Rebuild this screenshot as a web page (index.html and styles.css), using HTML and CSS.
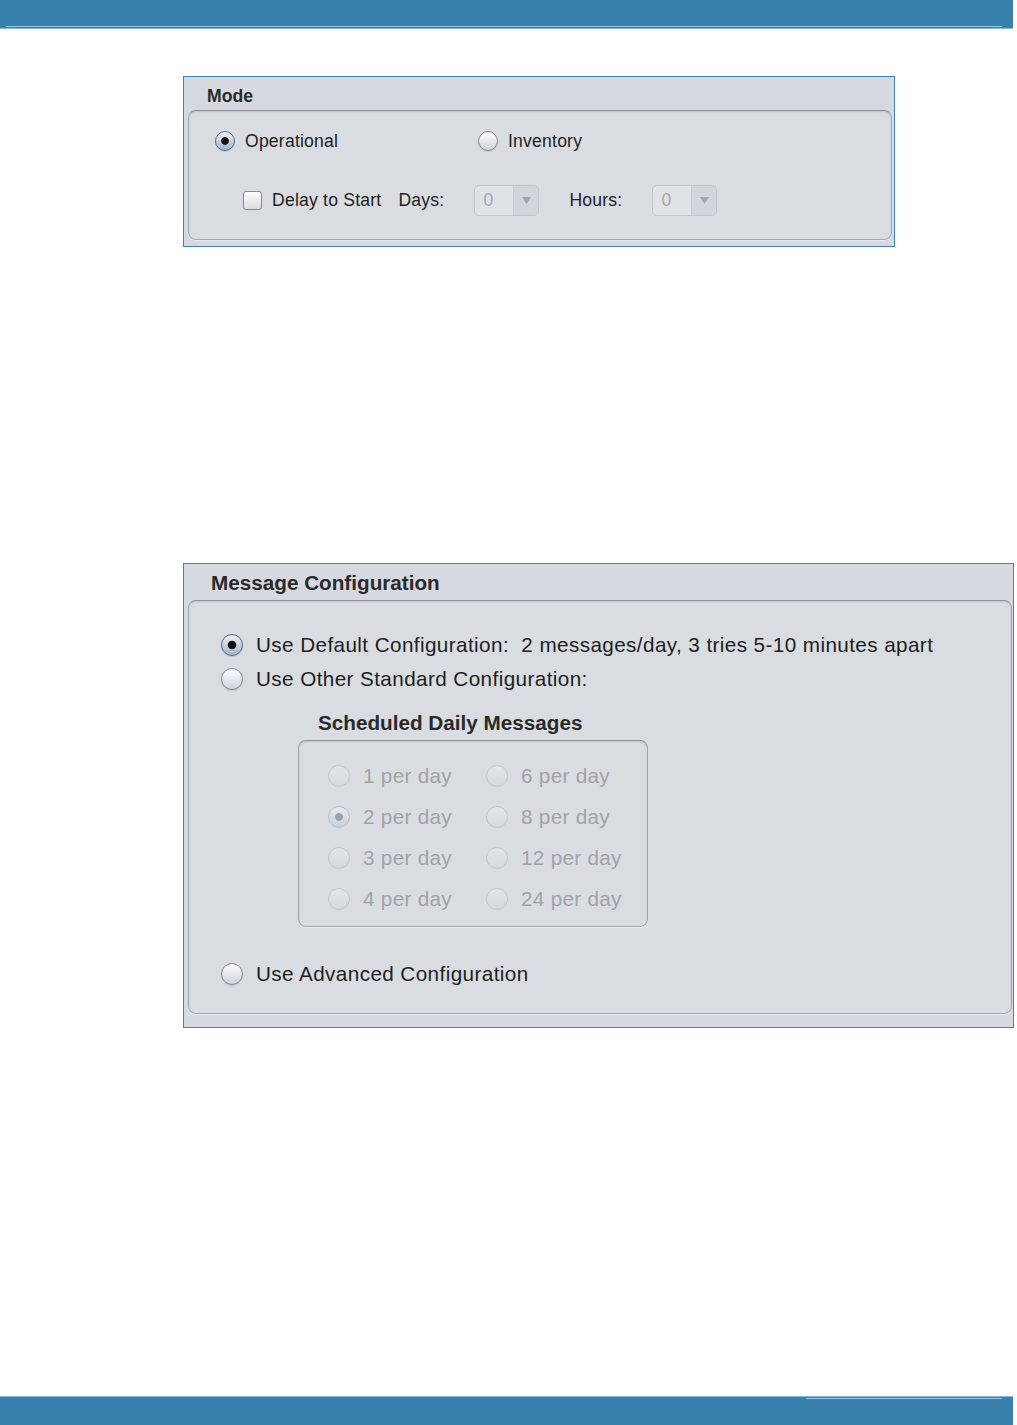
FILE: index.html
```html
<!DOCTYPE html>
<html lang="en">
<head>
    <meta charset="UTF-8">
    <title>Mode and Message Configuration</title>
    <link rel="stylesheet" href="styles.css">
</head>
<body>
    <div class="topbar">
        <div class="topbar-rule"></div>
    </div>

    <div class="content">
        <!-- Mode -->
        <div class="panel panel-mode">
            <div class="panel-title">Mode</div>
            <div class="group">
                <div class="row">
                    <label class="option option-wide">
                        <span class="radio on"></span>
                        <span>Operational</span>
                    </label>
                    <label class="option">
                        <span class="radio"></span>
                        <span>Inventory</span>
                    </label>
                </div>
                <div class="row row-delay">
                    <label class="option">
                        <span class="checkbox"></span>
                        <span>Delay to Start</span>
                    </label>
                    <span class="field-label days">Days:</span>
                    <div class="combo">
                        <span class="combo-value">0</span>
                        <span class="combo-arrow">
                            <svg width="9" height="7" viewBox="0 0 9 7"><polygon points="0,0 9,0 4.5,7" fill="#a3a8af"/></svg>
                        </span>
                    </div>
                    <span class="field-label hours">Hours:</span>
                    <div class="combo">
                        <span class="combo-value">0</span>
                        <span class="combo-arrow">
                            <svg width="9" height="7" viewBox="0 0 9 7"><polygon points="0,0 9,0 4.5,7" fill="#a3a8af"/></svg>
                        </span>
                    </div>
                </div>
            </div>
        </div>

        <!-- Message Configuration -->
        <div class="panel panel-msg">
            <div class="panel-title">Message Configuration</div>
            <div class="group">
                <div class="msg-options">
                    <label class="option">
                        <span class="radio on"></span>
                        <span>Use Default Configuration:&nbsp; 2 messages/day, 3 tries 5-10 minutes apart</span>
                    </label>
                    <label class="option">
                        <span class="radio"></span>
                        <span>Use Other Standard Configuration:</span>
                    </label>
                </div>

                <div class="schedule">
                    <div class="schedule-title">Scheduled Daily Messages</div>
                    <div class="group schedule-box">
                        <label class="option disabled"><span class="radio"></span><span>1 per day</span></label>
                        <label class="option disabled"><span class="radio"></span><span>6 per day</span></label>
                        <label class="option disabled"><span class="radio on"></span><span>2 per day</span></label>
                        <label class="option disabled"><span class="radio"></span><span>8 per day</span></label>
                        <label class="option disabled"><span class="radio"></span><span>3 per day</span></label>
                        <label class="option disabled"><span class="radio"></span><span>12 per day</span></label>
                        <label class="option disabled"><span class="radio"></span><span>4 per day</span></label>
                        <label class="option disabled"><span class="radio"></span><span>24 per day</span></label>
                    </div>
                </div>

                <label class="option advanced">
                    <span class="radio"></span>
                    <span>Use Advanced Configuration</span>
                </label>
            </div>
        </div>
    </div>

    <div class="bottombar">
        <div class="bottombar-rule"></div>
    </div>
</body>
</html>
```

FILE: styles.css
```css
/* Pagina con dos paneles de configuracion */

body {
    margin: 0;
    padding: 0;
    font-family: "Liberation Sans", Arial, sans-serif;
    color: #1e1e1e;
    background-color: white;
    display: flex;
    flex-direction: column;
    height: 100vh;
}
.topbar {
    width: 1013px;
    height: 29px;
    background-color: #3881ad;
    border-bottom: 1px solid #86badb;
    display: flex;
    align-items: flex-end;
    padding: 0 11px 0 6px;
    box-sizing: border-box;
    flex-shrink: 0;
}
.topbar-rule {
    width: 100%;
    height: 1px;
    background-color: #9cc4dc;
    margin-bottom: 1px;
}
.content {
    flex-grow: 1;
    padding: 47px 0 0 183px;
}
.bottombar {
    width: 1013px;
    height: 29px;
    background-color: #3881ad;
    border-top: 1px solid #86badb;
    display: flex;
    justify-content: flex-end;
    padding: 1px 11px 0 0;
    box-sizing: border-box;
    flex-shrink: 0;
}
.bottombar-rule {
    width: 196px;
    height: 1px;
    background-color: #9cc4dc;
}

/* Paneles */
.panel {
    border: 1px solid #3d83b3;
    background-color: #d6d9df;
    box-sizing: border-box;
}
.panel-title {
    font-weight: bold;
    color: #2a2a2a;
}
.group {
    border: 1px solid #a3a7ad;
    border-top-color: #8e9298;
    border-radius: 8px;
    background-color: #d9dce1;
    box-shadow: inset 0 1px 2px rgba(0, 0, 0, 0.12), 0 1px 0 rgba(255, 255, 255, 0.5);
}
.option {
    display: flex;
    align-items: center;
}

/* Controles */
.radio {
    flex-shrink: 0;
    border-radius: 50%;
    border: 1px solid #838a93;
    background: linear-gradient(#fdfdfe, #cfd4db);
    box-sizing: border-box;
    box-shadow: 0 1px 1px rgba(0, 0, 0, 0.12);
}
.radio.on {
    border-color: #5a6b7e;
    background: radial-gradient(circle, #111 0, #111 27%, transparent 33%), linear-gradient(#eef3f8, #9fb3c8);
}
.checkbox {
    width: 19px;
    height: 19px;
    flex-shrink: 0;
    border: 1px solid #838a93;
    border-radius: 3px;
    background: linear-gradient(#fdfdfe, #d9dde2);
    box-sizing: border-box;
}
.combo {
    width: 65px;
    height: 31px;
    display: flex;
    border: 1px solid #c3c7cd;
    border-radius: 5px;
    box-sizing: border-box;
    background-color: #dfe2e6;
    overflow: hidden;
}
.combo-value {
    flex-grow: 1;
    padding-left: 8px;
    line-height: 29px;
    color: #a5a8ad;
}
.combo-arrow {
    width: 24px;
    border-left: 1px solid #c6cad0;
    background-color: #d1d5dc;
    display: flex;
    align-items: center;
    justify-content: center;
}

/* Panel Mode */
.panel-mode {
    width: 712px;
    padding: 0 2px 6px 4px;
    font-size: 17.6px;
    letter-spacing: 0.2px;
}
.panel-mode .panel-title {
    padding: 9px 0 0 19px;
    line-height: 20px;
    margin-bottom: 4px;
    letter-spacing: 0;
}
.panel-mode .group {
    height: 130px;
    box-sizing: border-box;
    padding: 20px 0 0 26px;
}
.panel-mode .radio {
    width: 20px;
    height: 20px;
    margin-right: 10px;
}
.row {
    display: flex;
    align-items: center;
    height: 20px;
}
.option-wide {
    width: 263px;
}
.row-delay {
    height: 31px;
    margin-top: 34px;
    padding-left: 28px;
}
.row-delay .checkbox {
    margin-right: 10px;
}
.field-label.days {
    margin-left: 17px;
    margin-right: 30px;
}
.field-label.hours {
    margin-left: 30px;
    margin-right: 30px;
}

/* Panel Message Configuration */
.panel-msg {
    width: 831px;
    margin-top: 316px;
    padding: 0 1px 13px 4px;
    font-size: 20.7px;
    letter-spacing: 0.4px;
}
.panel-msg .panel-title {
    padding: 7px 0 0 23px;
    line-height: 24px;
    margin-bottom: 5px;
    letter-spacing: 0;
}
.panel-msg > .group {
    height: 414px;
    box-sizing: border-box;
    padding: 33px 0 0 32px;
}
.panel-msg .radio {
    width: 22px;
    height: 22px;
    margin-right: 13px;
}
.msg-options {
    display: flex;
    flex-direction: column;
    gap: 12px;
}
.msg-options .option {
    height: 22px;
}
.schedule {
    margin: 21px 0 0 77px;
}
.schedule-title {
    font-weight: bold;
    color: #2a2a2a;
    letter-spacing: 0;
    line-height: 24px;
    padding-left: 20px;
    margin-bottom: 5px;
}
.schedule-box {
    width: 350px;
    height: 187px;
    box-sizing: border-box;
    padding: 24px 0 0 29px;
    display: grid;
    grid-template-columns: 158px auto;
    grid-auto-rows: 22px;
    row-gap: 19px;
}
.schedule-box .option {
    letter-spacing: 0.3px;
}
.option.disabled {
    color: #a0a3a8;
}
.option.disabled .radio {
    border-color: #c3c6cb;
    background: linear-gradient(#e2e5e8, #d5d8dd);
    box-shadow: none;
}
.option.disabled .radio.on {
    border-color: #b9bec5;
    background: radial-gradient(circle, #9ba1a9 0, #9ba1a9 24%, transparent 31%), linear-gradient(#e6eaef, #c9d0d8);
}
.advanced {
    height: 22px;
    margin-top: 36px;
}
```
